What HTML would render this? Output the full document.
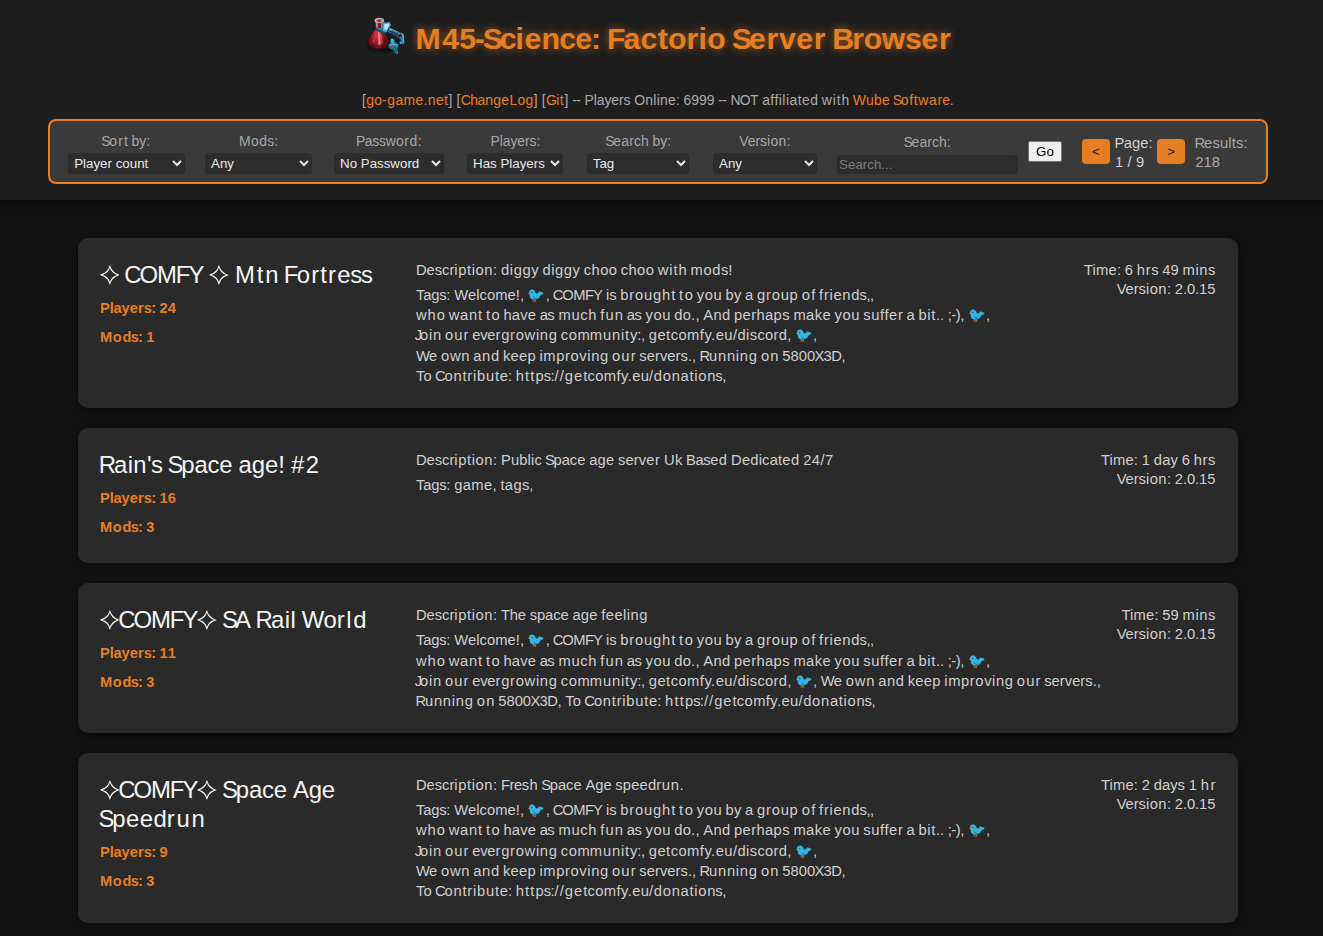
<!DOCTYPE html>
<html lang="en"><head><meta charset="utf-8"><title>M45-Science: Factorio Server Browser</title>
<style>
*{box-sizing:border-box}
html,body{margin:0;padding:0}
body{width:1323px;height:936px;overflow:hidden;background:#121212;color:#cfcfcf;font-family:"Liberation Sans",sans-serif;font-size:16px;position:relative}
.ln{position:absolute;white-space:pre}
a{color:#e67e22;text-decoration:none}
#hdr{position:absolute;left:0;top:0;width:1323px;height:200px;background:#1e1e1e;box-shadow:0 2px 10px rgba(0,0,0,.7)}
.ttl{color:#e67e22;font-weight:bold;text-shadow:0 0 9px rgba(230,126,34,.62)}
.lnk{color:#aaa}
#filter{position:absolute;left:48px;top:119px;width:1220px;height:65px;background:#3a3a3a;border:2px solid #e67e22;border-radius:8px}
.lbl{color:#a6a6a6}
select,input,button{font-family:"Liberation Sans",sans-serif;font-size:13.333px}
select{position:absolute;font-size:13.333px;background:#2d2d2d;color:#e8e8e8;border:0;border-radius:4px;padding:0 0 0 2px;margin:0}
input.s{position:absolute;background:#2d2d2d;color:#fff;border:0;border-radius:4px;padding:1px 2px 1px 2.6px;margin:0}
input.s::placeholder{color:#7a7a7a}
button.go{position:absolute;background:#efefef;color:#000;border:1px solid #767676;border-radius:2px;padding:0;margin:0}
.pg{position:absolute;background:#e67e22;color:#222;border:0;border-radius:4px;text-align:center;font-family:"Liberation Sans",sans-serif;font-size:13.333px}
.card{position:absolute;left:78px;width:1160px;background:#2a2a2a;border-radius:10px;box-shadow:0 2px 10px rgba(0,0,0,.5)}
.nm{color:#f4f4f4}
.or{color:#e67e22;font-weight:bold}
.ln{left:0;width:0}
.ln b,.ln a{position:absolute;top:0;font-weight:inherit}
.bird,.star{position:absolute;display:block}
</style></head><body>
<svg width="0" height="0" style="position:absolute"><defs>
<symbol id="bird" viewBox="0 0 16 14"><g shape-rendering="crispEdges"><rect x="2" y="0" width="1" height="1" fill="#35b2e1" fill-opacity="0.17"/><rect x="3" y="0" width="2" height="1" fill="#35b4e0" fill-opacity="0.49"/><rect x="5" y="0" width="1" height="1" fill="#37b6e1" fill-opacity="0.16"/><rect x="1" y="1" width="1" height="1" fill="#33b3e2" fill-opacity="0.27"/><rect x="2" y="1" width="4" height="1" fill="#36b4e1"/><rect x="6" y="1" width="1" height="1" fill="#36b4e1" fill-opacity="0.33"/><rect x="1" y="2" width="1" height="1" fill="#36b4e0" fill-opacity="0.87"/><rect x="2" y="2" width="1" height="1" fill="#36b4e1"/><rect x="3" y="2" width="1" height="1" fill="#34a5ce"/><rect x="4" y="2" width="2" height="1" fill="#36b4e1"/><rect x="6" y="2" width="1" height="1" fill="#35b3e1" fill-opacity="0.96"/><rect x="7" y="2" width="1" height="1" fill="#2db4e1" fill-opacity="0.07"/><rect x="10" y="2" width="1" height="1" fill="#37b6e4" fill-opacity="0.11"/><rect x="11" y="2" width="1" height="1" fill="#36b3e1" fill-opacity="0.50"/><rect x="12" y="2" width="1" height="1" fill="#36b4e2" fill-opacity="0.28"/><rect x="0" y="3" width="1" height="1" fill="#ff8015" fill-opacity="0.05"/><rect x="1" y="3" width="1" height="1" fill="#859e93" fill-opacity="0.96"/><rect x="2" y="3" width="1" height="1" fill="#36b4e1"/><rect x="3" y="3" width="1" height="1" fill="#2d5d6f"/><rect x="4" y="3" width="1" height="1" fill="#3398be"/><rect x="5" y="3" width="2" height="1" fill="#36b4e1"/><rect x="7" y="3" width="1" height="1" fill="#35b3e1" fill-opacity="0.53"/><rect x="10" y="3" width="1" height="1" fill="#36b4e1" fill-opacity="0.67"/><rect x="11" y="3" width="2" height="1" fill="#36b4e1"/><rect x="13" y="3" width="1" height="1" fill="#36b3e0" fill-opacity="0.95"/><rect x="14" y="3" width="1" height="1" fill="#36b3e1" fill-opacity="0.54"/><rect x="15" y="3" width="1" height="1" fill="#2abfea" fill-opacity="0.05"/><rect x="0" y="4" width="1" height="1" fill="#fa7d21" fill-opacity="0.57"/><rect x="1" y="4" width="1" height="1" fill="#f97d23"/><rect x="2" y="4" width="1" height="1" fill="#45afd1"/><rect x="3" y="4" width="5" height="1" fill="#36b4e1"/><rect x="8" y="4" width="1" height="1" fill="#35b4e1" fill-opacity="0.62"/><rect x="9" y="4" width="1" height="1" fill="#36b3e0" fill-opacity="0.65"/><rect x="10" y="4" width="5" height="1" fill="#36b4e1"/><rect x="15" y="4" width="1" height="1" fill="#36b3e1" fill-opacity="0.37"/><rect x="1" y="5" width="1" height="1" fill="#35b4e1" fill-opacity="0.49"/><rect x="2" y="5" width="11" height="1" fill="#36b4e1"/><rect x="13" y="5" width="1" height="1" fill="#35b4e0" fill-opacity="0.85"/><rect x="14" y="5" width="1" height="1" fill="#34b5e0" fill-opacity="0.33"/><rect x="1" y="6" width="1" height="1" fill="#34b3e0" fill-opacity="0.29"/><rect x="2" y="6" width="10" height="1" fill="#36b4e1"/><rect x="12" y="6" width="1" height="1" fill="#36b4e0" fill-opacity="0.52"/><rect x="1" y="7" width="1" height="1" fill="#35b5df" fill-opacity="0.09"/><rect x="2" y="7" width="3" height="1" fill="#36b4e1"/><rect x="5" y="7" width="1" height="1" fill="#239acd"/><rect x="6" y="7" width="1" height="1" fill="#32afdd"/><rect x="7" y="7" width="4" height="1" fill="#36b4e1"/><rect x="11" y="7" width="1" height="1" fill="#36b3e1" fill-opacity="0.73"/><rect x="2" y="8" width="1" height="1" fill="#35b4e1" fill-opacity="0.79"/><rect x="3" y="8" width="2" height="1" fill="#36b4e1"/><rect x="5" y="8" width="1" height="1" fill="#2aa3d4"/><rect x="6" y="8" width="1" height="1" fill="#1586be"/><rect x="7" y="8" width="3" height="1" fill="#36b4e1"/><rect x="10" y="8" width="1" height="1" fill="#2da7d8"/><rect x="11" y="8" width="1" height="1" fill="#1284bc" fill-opacity="0.77"/><rect x="2" y="9" width="1" height="1" fill="#31b5e6" fill-opacity="0.12"/><rect x="3" y="9" width="1" height="1" fill="#36b3e1" fill-opacity="0.86"/><rect x="4" y="9" width="2" height="1" fill="#36b4e1"/><rect x="6" y="9" width="1" height="1" fill="#28a1d2"/><rect x="7" y="9" width="1" height="1" fill="#0c7ab4"/><rect x="8" y="9" width="1" height="1" fill="#2198cc"/><rect x="9" y="9" width="1" height="1" fill="#2095c9" fill-opacity="0.85"/><rect x="10" y="9" width="1" height="1" fill="#0a79b5" fill-opacity="0.61"/><rect x="11" y="9" width="1" height="1" fill="#0068ae" fill-opacity="0.09"/><rect x="4" y="10" width="1" height="1" fill="#36b4e0" fill-opacity="0.29"/><rect x="5" y="10" width="1" height="1" fill="#74a2a5" fill-opacity="0.73"/><rect x="6" y="10" width="1" height="1" fill="#63a6b4" fill-opacity="0.64"/><rect x="7" y="10" width="1" height="1" fill="#908e78" fill-opacity="0.77"/><rect x="8" y="10" width="1" height="1" fill="#2a789f" fill-opacity="0.38"/><rect x="9" y="10" width="1" height="1" fill="#006ba9" fill-opacity="0.24"/><rect x="4" y="11" width="1" height="1" fill="#f97c21" fill-opacity="0.33"/><rect x="5" y="11" width="1" height="1" fill="#f87d22" fill-opacity="0.74"/><rect x="6" y="11" width="1" height="1" fill="#f87c22" fill-opacity="0.29"/><rect x="7" y="11" width="1" height="1" fill="#f97c22" fill-opacity="0.62"/><rect x="8" y="11" width="1" height="1" fill="#f97c1f" fill-opacity="0.16"/><rect x="4" y="12" width="1" height="1" fill="#fa7b21" fill-opacity="0.21"/><rect x="5" y="12" width="1" height="1" fill="#ff7b21" fill-opacity="0.12"/><rect x="6" y="12" width="1" height="1" fill="#f97d23" fill-opacity="0.55"/><rect x="7" y="12" width="1" height="1" fill="#fa7d22" fill-opacity="0.56"/><rect x="6" y="13" width="1" height="1" fill="#ff7f22" fill-opacity="0.12"/></g></symbol>
<g id="star"><path fill="currentColor" fill-rule="evenodd" d="M0 -10.2 Q2.1 -2.1 10.2 0 Q2.1 2.1 0 10.2 Q-2.1 2.1 -10.2 0 Q-2.1 -2.1 0 -10.2Z M0 -7.2 Q-1.65 -1.65 -7.2 0 Q-1.65 1.65 0 7.2 Q1.65 1.65 7.2 0 Q1.65 -1.65 0 -7.2Z"/></g>
</defs></svg>
<div id="hdr">
<svg id="logo" style="position:absolute;left:364px;top:14px" width="44" height="44" viewBox="0 0 44 44"><defs>
<linearGradient id="lgR" x1="0" y1="0" x2="1" y2="0"><stop offset="0" stop-color="#6e0c14"/><stop offset=".2" stop-color="#a8161f"/><stop offset=".42" stop-color="#cf2b39"/><stop offset=".56" stop-color="#d83c4a"/><stop offset=".72" stop-color="#a3141e"/><stop offset="1" stop-color="#5a0a11"/></linearGradient>
<linearGradient id="lgD" x1="0" y1="0" x2="0" y2="1"><stop offset=".4" stop-color="#2c0307" stop-opacity="0"/><stop offset="1" stop-color="#2c0307" stop-opacity=".65"/></linearGradient>
<linearGradient id="lgB" x1="0" y1="0" x2="0" y2="1"><stop offset="0" stop-color="#3aa6c8"/><stop offset="1" stop-color="#0f6482"/></linearGradient>
<filter id="lgF" x="-10%" y="-10%" width="120%" height="120%"><feGaussianBlur stdDeviation=".42"/></filter>
<filter id="lgS" x="-30%" y="-30%" width="160%" height="160%"><feGaussianBlur stdDeviation="1.8"/></filter>
</defs>
<ellipse cx="19" cy="31" rx="16" ry="7" fill="#000" opacity=".4" filter="url(#lgS)"/>
<g filter="url(#lgF)">
<path id="lgP" d="M11.8 14.4 L19.2 18.4 Q23.4 22.4 25 26.2 Q25.7 30.4 22.6 32.8 Q18.6 35 14.5 34.9 Q9 34.7 6 31.9 Q3.4 29.6 4.3 26.4 Q7.4 20 11.8 14.4Z" fill="url(#lgR)" stroke="#3a060b" stroke-width=".5"/>
<path d="M11.8 14.4 L19.2 18.4 Q23.4 22.4 25 26.2 Q25.7 30.4 22.6 32.8 Q18.6 35 14.5 34.9 Q9 34.7 6 31.9 Q3.4 29.6 4.3 26.4 Q7.4 20 11.8 14.4Z" fill="url(#lgD)"/>
<path d="M13.9 17.2 L15.4 17.6 L16.6 30.4 L14.4 30.6Z" fill="#f59aa3" opacity=".8"/>
<path d="M15.6 18 L16.8 18.6 L18.6 29 L16.9 30Z" fill="#e8606e" opacity=".6"/>
<path d="M11.2 18.6 L12.6 18.2 L10.6 28.8 L8.4 28.6Z" fill="#e05868" opacity=".4"/>
<path d="M19.6 21.6 L21 22.8 L23 30 L20.6 31Z" fill="#4e070d" opacity=".5"/>
<path d="M7 30 Q10 32.6 13 31.4 Q12 34 8.6 33Z" fill="#3a050a" opacity=".5"/>
<path d="M17 31 Q20 33 23 30.6 Q22.4 33.6 18.4 34.2Z" fill="#3a050a" opacity=".45"/>
<path d="M11.4 6.6 L19.4 6.6 L18.6 15.2 L12 14.4Z" fill="#b9a7ac" opacity=".85"/>
<path d="M13.6 8 L17.4 8 L17.2 14.4 L14 13.8Z" fill="#8c1822"/>
<ellipse cx="15.4" cy="6.4" rx="4.7" ry="2.6" fill="#bfb8bb"/>
<ellipse cx="15.4" cy="6.6" rx="3.2" ry="1.6" fill="#a9636d"/>
<ellipse cx="15.2" cy="6.9" rx="1.5" ry=".9" fill="#8c1822"/>
<path d="M11.4 12.6 L18.4 15.6 L19 17.6 L22.2 18.2 L21.6 20 L18.8 20 L11.2 15Z" fill="#0e5a74" stroke="#062c3a" stroke-width=".4"/>
<path d="M12 13.4 L18.2 16.2" stroke="#5cc0de" stroke-width=".6"/>
<path d="M18.9 8.4 L25.5 8 L27.1 10.8 L22.2 18.6 L18.6 17.6 L18.2 14Z" fill="#46aed0" stroke="#0c4a60" stroke-width=".4"/>
<path d="M20.4 9.8 L24.6 9.6 L25.4 11 L22.4 16.2 L20.4 15.6Z" fill="#d4eef8" opacity=".85"/>
<circle cx="21.8" cy="9" r=".7" fill="#c03030"/>
<path d="M25.4 13.4 L37 19 L35 23.6 L23.4 17.8Z" fill="url(#lgB)" stroke="#062c3a" stroke-width=".5"/>
<path d="M25.8 14.4 L36.4 19.6" stroke="#8fd6ec" stroke-width=".7"/>
<path d="M24.8 16.6 L35.2 21.6" stroke="#04222e" stroke-width="1"/>
<path d="M29 15.6 L27.8 19.4 M31.6 16.8 L30.4 20.6 M33.8 18 L32.8 21.6" stroke="#083848" stroke-width=".5"/>
<path d="M36.2 18.4 Q40.4 18.6 40 23 Q39.6 26 40.6 28.8 Q40.8 30.6 38.8 30.2 Q36.6 29.6 35.4 28.8 Q36.8 27.4 36.8 25.4 Q35.4 25.6 34.4 26.2 L33 24 Q35.2 23 36 22Z" fill="#2390b4" stroke="#062c3a" stroke-width=".4"/>
<path d="M37.8 19.4 Q39.6 20.2 39.4 23.2 Q39.2 25.8 40 28.4" stroke="#9fe0f4" stroke-width=".6" fill="none"/>
<path d="M35.6 28.6 L37.4 29.4" stroke="#bfeaf8" stroke-width=".9"/>
<circle cx="36.5" cy="22" r="1.4" fill="#1e0c10"/>
<circle cx="34.6" cy="20.6" r=".8" fill="#c83434"/>
<circle cx="36.5" cy="22.8" r=".7" fill="#c83434"/>
<path d="M35.2 23.4 L30.6 26.8 L32 28.6 L36 25Z" fill="#0a1418"/>
<path d="M26 25 Q28.2 23.8 30.4 24.8 L31.2 28 Q33.4 28.6 35 30.8 L34 33 Q33 35.2 34.2 38.2 Q34.4 40.4 32 40 Q30 38.4 29.6 35.8 Q26.4 35.4 24.2 33.6 Q23.6 30.8 26 29.6Z" fill="#1a84a8" stroke="#062c3a" stroke-width=".45"/>
<path d="M27.2 25.4 L29 25.2 L29.6 29 L27.8 29.4Z" fill="#9fe0f4" opacity=".85"/>
<path d="M28.2 26.4 L28.6 28.6" stroke="#0b4a60" stroke-width=".5"/>
<path d="M25.4 31 Q29 29.8 33.2 31.2" stroke="#7fd0e8" stroke-width=".7" fill="none"/>
<path d="M30.8 32.6 L32.4 37.6" stroke="#083848" stroke-width=".8"/>
<path d="M25.2 32.8 Q27.6 34.2 30 34.4" stroke="#083848" stroke-width=".5" fill="none"/>
<circle cx="28.4" cy="32.4" r=".5" fill="#c83434"/>
</g></svg>
<div class="ln ttl" style="top:18px;font-size:30.24px;line-height:41px;height:41px;"><b style="left:415.59px;letter-spacing:1.61px">M4</b><b style="left:459.22px;letter-spacing:-1.2px">5-</b><b style="left:482.75px">S</b><b style="left:499.79px">c</b><b style="left:515.62px;letter-spacing:0.4px">ien</b><b style="left:559.16px">c</b><b style="left:575.2px">e</b><b style="left:590.92px">:</b><b style="left:606.88px">F</b><b style="left:623.61px;letter-spacing:0.2px">actorio</b><b style="left:731.71px">S</b><b style="left:749.08px;letter-spacing:0.63px">erver</b><b style="left:832.23px">B</b><b style="left:852.31px;letter-spacing:-0.36px">rowse</b><b style="left:938.88px">r</b></div>
<div class="ln lnk" style="top:90px;font-size:13.94px;line-height:20px;height:20px;"><b style="left:361.99px">[</b><a style="left:366.17px;letter-spacing:0.35px">go-game.net</a><b style="left:448.43px">]</b><b style="left:456.46px">[</b><a style="left:460.64px;letter-spacing:-0.49px">Cha</a><a style="left:485.25px;letter-spacing:0.31px">ngeLog</a><b style="left:533.71px">]</b><b style="left:541.74px">[</b><a style="left:545.92px;letter-spacing:-0.55px">Gi</a><a style="left:559.84px">t</a><b style="left:564.54px">]</b><b style="left:572.27px;letter-spacing:-0.55px">--</b><b style="left:584.58px;letter-spacing:-0.08px">Players</b><b style="left:634.22px;letter-spacing:0.25px">Online:</b><b style="left:683.52px;letter-spacing:0.02px">6999</b><b style="left:718.17px;letter-spacing:-0.55px">--</b><b style="left:730.48px;letter-spacing:-0.66px">NOT</b><b style="left:762.14px;letter-spacing:0.47px">affiliated</b><b style="left:821.75px;letter-spacing:0.89px">with</b><a style="left:852.81px;letter-spacing:0.24px">Wube</a><a style="left:892.66px">S</a><a style="left:900.75px;letter-spacing:0.68px">oftwar</a><a style="left:942.16px">e</a><b style="left:949.78px">.</b></div>
<div id="filter">
<div class="ln lbl" style="top:10px;font-size:13.94px;line-height:20px;height:20px;"><b style="left:51.14px">S</b><b style="left:59.23px;letter-spacing:1.23px">ort</b><b style="left:81.55px;letter-spacing:0.02px">by:</b></div>
<select style="left:18.2px;top:32.0px;width:116.8px;height:21.0px"><option>Player count</option></select>
<div class="ln lbl" style="top:10px;font-size:13.94px;line-height:20px;height:20px;"><b style="left:188.95px;letter-spacing:0.43px">Mods</b><b style="left:224.22px">:</b></div>
<select style="left:155.0px;top:32.0px;width:107.0px;height:21.0px"><option>Any</option></select>
<div class="ln lbl" style="top:10px;font-size:13.94px;line-height:20px;height:20px;"><b style="left:306.05px">P</b><b style="left:314.64px;letter-spacing:-0.16px">assw</b><b style="left:345.97px;letter-spacing:0.51px">ord:</b></div>
<select style="left:284.0px;top:32.0px;width:110.0px;height:21.0px"><option>No Password</option></select>
<div class="ln lbl" style="top:10px;font-size:13.94px;line-height:20px;height:20px;"><b style="left:440.62px;letter-spacing:-0.1px">Players:</b></div>
<select style="left:417.0px;top:32.0px;width:96.0px;height:21.0px"><option>Has Players</option></select>
<div class="ln lbl" style="top:10px;font-size:13.94px;line-height:20px;height:20px;"><b style="left:555.24px">S</b><b style="left:563.33px;letter-spacing:0.16px">earch</b><b style="left:602.45px;letter-spacing:0.02px">by:</b></div>
<select style="left:536.8px;top:32.0px;width:101.9px;height:21.0px"><option>Tag</option></select>
<div class="ln lbl" style="top:10px;font-size:13.94px;line-height:20px;height:20px;"><b style="left:689.27px;letter-spacing:-0.08px">Vers</b><b style="left:716.94px;letter-spacing:0.41px">ion:</b></div>
<select style="left:663.0px;top:32.0px;width:104.0px;height:21.0px"><option>Any</option></select>
<div class="ln lbl" style="top:11px;font-size:13.94px;line-height:20px;height:20px;"><b style="left:853.52px">S</b><b style="left:861.61px;letter-spacing:0.07px">earch:</b></div>
<input class="s" placeholder="Search..." style="left:786.5px;top:34.2px;width:181.5px;height:18.6px">
<button class="go" style="left:978.3px;top:20.3px;width:33.4px;height:20.5px">Go</button>
<div class="pg" style="left:1031.7px;top:17.8px;width:28.5px;height:25.5px;line-height:25px">&lt;</div>
<div class="ln" style="top:12px;font-size:14.76px;line-height:20px;height:20px;"><b style="left:1064.61px">P</b><b style="left:1073.7px;letter-spacing:0.05px">age:</b></div>
<div class="ln" style="top:31px;font-size:14.76px;line-height:20px;height:20px;"><b style="left:1065.01px">1</b><b style="left:1077.61px">/</b><b style="left:1086.1px">9</b></div>
<div class="pg" style="left:1107.0px;top:17.8px;width:28.3px;height:25.5px;line-height:25px">&gt;</div>
<div class="ln lbl" style="top:12px;font-size:14.76px;line-height:20px;height:20px;"><b style="left:1144.59px">R</b><b style="left:1154.12px;letter-spacing:0.14px">esults:</b></div>
<div class="ln lbl" style="top:31px;font-size:14.76px;line-height:20px;height:20px;"><b style="left:1145.19px;letter-spacing:0.02px">218</b></div>
</div>
</div>
<div class="card" style="top:238px;height:170px">
<div class="ln nm" style="top:22px;font-size:23.909px;line-height:29px;height:29px;"><svg class="star" style="left:21.58px;top:5.20px" width="19.8" height="19.8" viewBox="-10 -10 20 20"><use href="#star"/></svg><b style="left:46.2px">C</b><b style="left:61.42px;letter-spacing:-1.07px">OMF</b><b style="left:110.54px">Y</b><svg class="star" style="left:131.40px;top:5.20px" width="19.8" height="19.8" viewBox="-10 -10 20 20"><use href="#star"/></svg><b style="left:157.11px;letter-spacing:1.85px">Mtn</b><b style="left:205.78px">F</b><b style="left:218.67px;letter-spacing:1.19px">ortre</b><b style="left:272.16px">s</b><b style="left:283.1px">s</b></div>
<div class="ln or" style="top:60px;font-size:14.606px;line-height:20px;height:20px;"><b style="left:22px;letter-spacing:-0.1px">Play</b><b style="left:51.77px;letter-spacing:0.05px">ers</b><b style="left:73.24px">:</b><b style="left:81.53px;letter-spacing:0.06px">24</b></div>
<div class="ln or" style="top:89px;font-size:14.606px;line-height:20px;height:20px;"><b style="left:22px;letter-spacing:0.66px">Mod</b><b style="left:52.87px">s</b><b style="left:59.94px">:</b><b style="left:68.25px">1</b></div>
<div class="ln" style="top:22px;font-size:14.76px;line-height:20px;height:20px;"><b style="left:338px;letter-spacing:-0.05px">Descr</b><b style="left:376.36px;letter-spacing:0.58px">iption:</b><b style="left:423.05px;letter-spacing:0.57px">diggy</b><b style="left:464.41px;letter-spacing:0.57px">diggy</b><b style="left:505.77px;letter-spacing:0.4px">choo</b><b style="left:542.73px;letter-spacing:0.4px">choo</b><b style="left:579.7px;letter-spacing:0.95px">with</b><b style="left:612.58px;letter-spacing:0.59px">mods</b><b style="left:650.33px">!</b></div>
<div class="ln" style="top:47px;font-size:14.76px;line-height:20px;height:20px;"><b style="left:338px;letter-spacing:-0.2px">Tags:</b><b style="left:376.28px;letter-spacing:0.04px">Welcome!,</b><svg class="bird" style="left:450.2px;top:4px" width="16" height="14" viewBox="0 0 16 14"><use href="#bird"/></svg><b style="left:467.75px">,</b><b style="left:474.84px">C</b><b style="left:484.28px;letter-spacing:-0.51px">OMF</b><b style="left:514.94px">Y</b><b style="left:527.95px;letter-spacing:-0.06px">is</b><b style="left:542.31px;letter-spacing:0.82px">brought</b><b style="left:601.11px;letter-spacing:1.58px">to</b><b style="left:618.77px;letter-spacing:0.57px">you</b><b style="left:647.47px;letter-spacing:0.3px">by</b><b style="left:667.05px">a</b><b style="left:678.95px;letter-spacing:0.79px">group</b><b style="left:723.67px;letter-spacing:1.34px">of</b><b style="left:741.09px;letter-spacing:0.7px">friend</b><b style="left:781.55px;letter-spacing:-0.49px">s,,</b></div>
<div class="ln" style="top:67px;font-size:14.76px;line-height:20px;height:20px;"><b style="left:338px;letter-spacing:0.91px">who</b><b style="left:370.67px;letter-spacing:0.76px">want</b><b style="left:407.91px;letter-spacing:1.58px">to</b><b style="left:425.56px;letter-spacing:0.12px">have</b><b style="left:461.72px;letter-spacing:-0.64px">as</b><b style="left:480.44px;letter-spacing:0.68px">much</b><b style="left:522.34px;letter-spacing:1.1px">fun</b><b style="left:548.84px;letter-spacing:-0.64px">as</b><b style="left:567.56px;letter-spacing:0.57px">you</b><b style="left:596.27px;letter-spacing:0.21px">do.,</b><b style="left:625.3px;letter-spacing:0.34px">And</b><b style="left:656px;letter-spacing:0.37px">perhaps</b><b style="left:715.38px;letter-spacing:0.41px">make</b><b style="left:756.47px;letter-spacing:0.57px">you</b><b style="left:785.17px;letter-spacing:0.61px">suffer</b><b style="left:828.6px">a</b><b style="left:840.5px;letter-spacing:0.63px">bit.</b><b style="left:861.96px">.</b><b style="left:869.73px;letter-spacing:-0.47px">;-),</b><svg class="bird" style="left:890.5px;top:4px" width="16" height="14" viewBox="0 0 16 14"><use href="#bird"/></svg><b style="left:908.03px">,</b></div>
<div class="ln" style="top:87px;font-size:14.76px;line-height:20px;height:20px;"><b style="left:336.8px">J</b><b style="left:341.92px;letter-spacing:0.8px">oin</b><b style="left:367px;letter-spacing:1.09px">our</b><b style="left:394.3px;letter-spacing:-0.28px">eve</b><b style="left:417.55px;letter-spacing:0.69px">rgrowing</b><b style="left:482.8px;letter-spacing:0.59px">com</b><b style="left:511.86px;letter-spacing:0.79px">munity</b><b style="left:559.34px;letter-spacing:-0.5px">:,</b><b style="left:570.83px;letter-spacing:0.44px">getcomfy.eu/dis</b><b style="left:679.44px;letter-spacing:0.29px">cord,</b><svg class="bird" style="left:717.5px;top:4px" width="16" height="14" viewBox="0 0 16 14"><use href="#bird"/></svg><b style="left:735.06px">,</b></div>
<div class="ln" style="top:108px;font-size:14.76px;line-height:20px;height:20px;"><b style="left:338px;letter-spacing:-0.66px">We</b><b style="left:362.97px;letter-spacing:0.77px">own</b><b style="left:395.34px;letter-spacing:0.59px">and</b><b style="left:424.92px;letter-spacing:0.25px">keep</b><b style="left:461.45px;letter-spacing:0.6px">improving</b><b style="left:534.06px;letter-spacing:1.09px">our</b><b style="left:561.36px;letter-spacing:0.03px">servers.,</b><b style="left:621.45px">R</b><b style="left:630.98px;letter-spacing:0.75px">unning</b><b style="left:682.89px;letter-spacing:1.17px">on</b><b style="left:704.25px;letter-spacing:0.02px">5800</b><b style="left:736.47px">X</b><b style="left:745.59px;letter-spacing:-0.48px">3D,</b></div>
<div class="ln" style="top:128px;font-size:14.76px;line-height:20px;height:20px;"><b style="left:338px;letter-spacing:0.11px">To</b><b style="left:356.91px">C</b><b style="left:366.55px;letter-spacing:0.75px">ontribute</b><b style="left:429.89px">:</b><b style="left:437.67px;letter-spacing:1.16px">http</b><b style="left:465.8px;letter-spacing:-0.73px">s:</b><b style="left:476.55px;letter-spacing:1.03px">//get</b><b style="left:509.42px;letter-spacing:0.4px">comfy.eu</b><b style="left:571.06px;letter-spacing:0.7px">/donation</b><b style="left:637.21px">s</b><b style="left:644.18px">,</b></div>
<div class="ln" style="top:22px;font-size:14.76px;line-height:20px;height:20px;"><b style="left:1005.94px;letter-spacing:0.19px">Time:</b><b style="left:1046.85px">6</b><b style="left:1058.83px;letter-spacing:0.6px">hrs</b><b style="left:1084.31px;letter-spacing:0.03px">49</b><b style="left:1104.53px;letter-spacing:0.59px">mins</b></div>
<div class="ln" style="top:41px;font-size:14.76px;line-height:20px;height:20px;"><b style="left:1038.64px;letter-spacing:-0.08px">Vers</b><b style="left:1067.94px;letter-spacing:0.44px">ion:</b><b style="left:1096.86px;letter-spacing:-0.09px">2.0.15</b></div>
</div>
<div class="card" style="top:428px;height:135px">
<div class="ln nm" style="top:22px;font-size:23.909px;line-height:29px;height:29px;"><b style="left:20.68px">R</b><b style="left:36.05px;letter-spacing:0.32px">ain'</b><b style="left:72.92px">s</b><b style="left:89.46px">S</b><b style="left:103.27px;letter-spacing:-0.16px">pac</b><b style="left:141.34px">e</b><b style="left:160.56px;letter-spacing:-0.05px">age!</b><b style="left:212.98px;letter-spacing:1.55px">#2</b></div>
<div class="ln or" style="top:60px;font-size:14.606px;line-height:20px;height:20px;"><b style="left:22px;letter-spacing:-0.1px">Play</b><b style="left:51.77px;letter-spacing:0.05px">ers</b><b style="left:73.24px">:</b><b style="left:81.53px;letter-spacing:0.06px">16</b></div>
<div class="ln or" style="top:89px;font-size:14.606px;line-height:20px;height:20px;"><b style="left:22px;letter-spacing:0.66px">Mod</b><b style="left:52.87px">s</b><b style="left:59.94px">:</b><b style="left:68.25px">3</b></div>
<div class="ln" style="top:22px;font-size:14.76px;line-height:20px;height:20px;"><b style="left:338px;letter-spacing:-0.05px">Descr</b><b style="left:376.36px;letter-spacing:0.58px">iption:</b><b style="left:423.05px;letter-spacing:0.11px">Public</b><b style="left:466.92px">S</b><b style="left:475.48px;letter-spacing:-0.03px">pace</b><b style="left:511.2px;letter-spacing:0.2px">age</b><b style="left:540px;letter-spacing:0.07px">serve</b><b style="left:576.89px">r</b><b style="left:586.08px;letter-spacing:0.17px">Uk</b><b style="left:608.05px;letter-spacing:-0.41px">Base</b><b style="left:640.8px">d</b><b style="left:653.09px;letter-spacing:0.17px">Dedicate</b><b style="left:712.88px">d</b><b style="left:725.17px;letter-spacing:0.43px">24/7</b></div>
<div class="ln" style="top:47px;font-size:14.76px;line-height:20px;height:20px;"><b style="left:338px;letter-spacing:-0.2px">Tags:</b><b style="left:376.28px;letter-spacing:0.32px">game,</b><b style="left:422.39px;letter-spacing:0.36px">tags</b><b style="left:451.24px">,</b></div>
<div class="ln" style="top:22px;font-size:14.76px;line-height:20px;height:20px;"><b style="left:1022.88px;letter-spacing:0.19px">Time:</b><b style="left:1063.79px">1</b><b style="left:1075.77px;letter-spacing:0.22px">day</b><b style="left:1103.79px">6</b><b style="left:1115.77px;letter-spacing:0.6px">hrs</b></div>
<div class="ln" style="top:41px;font-size:14.76px;line-height:20px;height:20px;"><b style="left:1038.64px;letter-spacing:-0.08px">Vers</b><b style="left:1067.94px;letter-spacing:0.44px">ion:</b><b style="left:1096.86px;letter-spacing:-0.09px">2.0.15</b></div>
</div>
<div class="card" style="top:583px;height:150px">
<div class="ln nm" style="top:22px;font-size:23.909px;line-height:29px;height:29px;"><svg class="star" style="left:21.58px;top:5.20px" width="19.8" height="19.8" viewBox="-10 -10 20 20"><use href="#star"/></svg><b style="left:40.19px">C</b><b style="left:55.41px;letter-spacing:-1.07px">OMF</b><b style="left:104.53px">Y</b><svg class="star" style="left:119.37px;top:5.20px" width="19.8" height="19.8" viewBox="-10 -10 20 20"><use href="#star"/></svg><b style="left:143.94px">S</b><b style="left:156.98px">A</b><b style="left:177.52px">R</b><b style="left:192.89px;letter-spacing:0.48px">ail</b><b style="left:223.8px;letter-spacing:-0.42px">Wo</b><b style="left:258.78px;letter-spacing:1.55px">rld</b></div>
<div class="ln or" style="top:60px;font-size:14.606px;line-height:20px;height:20px;"><b style="left:22px;letter-spacing:-0.1px">Play</b><b style="left:51.77px;letter-spacing:0.05px">ers</b><b style="left:73.24px">:</b><b style="left:81.53px;letter-spacing:0.86px">11</b></div>
<div class="ln or" style="top:89px;font-size:14.606px;line-height:20px;height:20px;"><b style="left:22px;letter-spacing:0.66px">Mod</b><b style="left:52.87px">s</b><b style="left:59.94px">:</b><b style="left:68.25px">3</b></div>
<div class="ln" style="top:22px;font-size:14.76px;line-height:20px;height:20px;"><b style="left:338px;letter-spacing:-0.05px">Descr</b><b style="left:376.36px;letter-spacing:0.58px">iption:</b><b style="left:423.05px;letter-spacing:-0.22px">The</b><b style="left:451.81px;letter-spacing:-0.14px">space</b><b style="left:494.41px;letter-spacing:0.2px">age</b><b style="left:523.2px;letter-spacing:0.47px">feeling</b></div>
<div class="ln" style="top:47px;font-size:14.76px;line-height:20px;height:20px;"><b style="left:338px;letter-spacing:-0.2px">Tags:</b><b style="left:376.28px;letter-spacing:0.04px">Welcome!,</b><svg class="bird" style="left:450.2px;top:4px" width="16" height="14" viewBox="0 0 16 14"><use href="#bird"/></svg><b style="left:467.75px">,</b><b style="left:474.84px">C</b><b style="left:484.28px;letter-spacing:-0.51px">OMF</b><b style="left:514.94px">Y</b><b style="left:527.95px;letter-spacing:-0.06px">is</b><b style="left:542.31px;letter-spacing:0.82px">brought</b><b style="left:601.11px;letter-spacing:1.58px">to</b><b style="left:618.77px;letter-spacing:0.57px">you</b><b style="left:647.47px;letter-spacing:0.3px">by</b><b style="left:667.05px">a</b><b style="left:678.95px;letter-spacing:0.79px">group</b><b style="left:723.67px;letter-spacing:1.34px">of</b><b style="left:741.09px;letter-spacing:0.7px">friend</b><b style="left:781.55px;letter-spacing:-0.49px">s,,</b></div>
<div class="ln" style="top:68px;font-size:14.76px;line-height:20px;height:20px;"><b style="left:338px;letter-spacing:0.91px">who</b><b style="left:370.67px;letter-spacing:0.76px">want</b><b style="left:407.91px;letter-spacing:1.58px">to</b><b style="left:425.56px;letter-spacing:0.12px">have</b><b style="left:461.72px;letter-spacing:-0.64px">as</b><b style="left:480.44px;letter-spacing:0.68px">much</b><b style="left:522.34px;letter-spacing:1.1px">fun</b><b style="left:548.84px;letter-spacing:-0.64px">as</b><b style="left:567.56px;letter-spacing:0.57px">you</b><b style="left:596.27px;letter-spacing:0.21px">do.,</b><b style="left:625.3px;letter-spacing:0.34px">And</b><b style="left:656px;letter-spacing:0.37px">perhaps</b><b style="left:715.38px;letter-spacing:0.41px">make</b><b style="left:756.47px;letter-spacing:0.57px">you</b><b style="left:785.17px;letter-spacing:0.61px">suffer</b><b style="left:828.6px">a</b><b style="left:840.5px;letter-spacing:0.63px">bit.</b><b style="left:861.96px">.</b><b style="left:869.73px;letter-spacing:-0.47px">;-),</b><svg class="bird" style="left:890.5px;top:4px" width="16" height="14" viewBox="0 0 16 14"><use href="#bird"/></svg><b style="left:908.03px">,</b></div>
<div class="ln" style="top:88px;font-size:14.76px;line-height:20px;height:20px;"><b style="left:336.8px">J</b><b style="left:341.92px;letter-spacing:0.8px">oin</b><b style="left:367px;letter-spacing:1.09px">our</b><b style="left:394.3px;letter-spacing:-0.28px">eve</b><b style="left:417.55px;letter-spacing:0.69px">rgrowing</b><b style="left:482.8px;letter-spacing:0.59px">com</b><b style="left:511.86px;letter-spacing:0.79px">munity</b><b style="left:559.34px;letter-spacing:-0.5px">:,</b><b style="left:570.83px;letter-spacing:0.44px">getcomfy.eu/dis</b><b style="left:679.44px;letter-spacing:0.29px">cord,</b><svg class="bird" style="left:717.5px;top:4px" width="16" height="14" viewBox="0 0 16 14"><use href="#bird"/></svg><b style="left:735.06px">,</b><b style="left:742.8px;letter-spacing:-0.66px">We</b><b style="left:767.77px;letter-spacing:0.77px">own</b><b style="left:800.14px;letter-spacing:0.59px">and</b><b style="left:829.72px;letter-spacing:0.25px">keep</b><b style="left:866.25px;letter-spacing:0.6px">improving</b><b style="left:938.86px;letter-spacing:1.09px">our</b><b style="left:966.16px;letter-spacing:0.03px">servers.,</b></div>
<div class="ln" style="top:108px;font-size:14.76px;line-height:20px;height:20px;"><b style="left:337.4px">R</b><b style="left:346.94px;letter-spacing:0.75px">unning</b><b style="left:398.84px;letter-spacing:1.17px">on</b><b style="left:420.2px;letter-spacing:0.02px">5800</b><b style="left:452.42px">X</b><b style="left:461.55px;letter-spacing:-0.48px">3D,</b><b style="left:487.34px;letter-spacing:0.11px">To</b><b style="left:506.26px">C</b><b style="left:515.89px;letter-spacing:0.75px">ontribute</b><b style="left:579.24px">:</b><b style="left:587.02px;letter-spacing:1.16px">http</b><b style="left:615.14px;letter-spacing:-0.73px">s:</b><b style="left:625.89px;letter-spacing:1.03px">//get</b><b style="left:658.77px;letter-spacing:0.4px">comfy.eu</b><b style="left:720.41px;letter-spacing:0.7px">/donation</b><b style="left:786.55px">s</b><b style="left:793.52px">,</b></div>
<div class="ln" style="top:22px;font-size:14.76px;line-height:20px;height:20px;"><b style="left:1043.41px;letter-spacing:0.19px">Time:</b><b style="left:1084.31px;letter-spacing:0.03px">59</b><b style="left:1104.53px;letter-spacing:0.59px">mins</b></div>
<div class="ln" style="top:41px;font-size:14.76px;line-height:20px;height:20px;"><b style="left:1038.64px;letter-spacing:-0.08px">Vers</b><b style="left:1067.94px;letter-spacing:0.44px">ion:</b><b style="left:1096.86px;letter-spacing:-0.09px">2.0.15</b></div>
</div>
<div class="card" style="top:753px;height:170px">
<div class="ln nm" style="top:22px;font-size:23.909px;line-height:29px;height:29px;"><svg class="star" style="left:21.58px;top:5.20px" width="19.8" height="19.8" viewBox="-10 -10 20 20"><use href="#star"/></svg><b style="left:40.19px">C</b><b style="left:55.41px;letter-spacing:-1.07px">OMF</b><b style="left:104.53px">Y</b><svg class="star" style="left:119.37px;top:5.20px" width="19.8" height="19.8" viewBox="-10 -10 20 20"><use href="#star"/></svg><b style="left:143.94px">S</b><b style="left:157.75px;letter-spacing:-0.16px">pac</b><b style="left:195.82px">e</b><b style="left:215.05px;letter-spacing:-0.28px">Age</b></div>
<div class="ln nm" style="top:51px;font-size:23.909px;line-height:29px;height:29px;"><b style="left:20.55px">S</b><b style="left:34.36px;letter-spacing:0.42px">peed</b><b style="left:88.81px;letter-spacing:1.76px">run</b></div>
<div class="ln or" style="top:89px;font-size:14.606px;line-height:20px;height:20px;"><b style="left:22px;letter-spacing:-0.1px">Play</b><b style="left:51.77px;letter-spacing:0.05px">ers</b><b style="left:73.24px">:</b><b style="left:81.55px">9</b></div>
<div class="ln or" style="top:118px;font-size:14.606px;line-height:20px;height:20px;"><b style="left:22px;letter-spacing:0.66px">Mod</b><b style="left:52.87px">s</b><b style="left:59.94px">:</b><b style="left:68.25px">3</b></div>
<div class="ln" style="top:22px;font-size:14.76px;line-height:20px;height:20px;"><b style="left:338px;letter-spacing:-0.05px">Descr</b><b style="left:376.36px;letter-spacing:0.58px">iption:</b><b style="left:423.05px;letter-spacing:-0.46px">Fres</b><b style="left:451.52px">h</b><b style="left:463.15px">S</b><b style="left:471.72px;letter-spacing:-0.03px">pace</b><b style="left:507.44px;letter-spacing:-0.05px">Age</b><b style="left:537.36px;letter-spacing:0.14px">speed</b><b style="left:578.17px;letter-spacing:0.71px">run.</b></div>
<div class="ln" style="top:47px;font-size:14.76px;line-height:20px;height:20px;"><b style="left:338px;letter-spacing:-0.2px">Tags:</b><b style="left:376.28px;letter-spacing:0.04px">Welcome!,</b><svg class="bird" style="left:450.2px;top:4px" width="16" height="14" viewBox="0 0 16 14"><use href="#bird"/></svg><b style="left:467.75px">,</b><b style="left:474.84px">C</b><b style="left:484.28px;letter-spacing:-0.51px">OMF</b><b style="left:514.94px">Y</b><b style="left:527.95px;letter-spacing:-0.06px">is</b><b style="left:542.31px;letter-spacing:0.82px">brought</b><b style="left:601.11px;letter-spacing:1.58px">to</b><b style="left:618.77px;letter-spacing:0.57px">you</b><b style="left:647.47px;letter-spacing:0.3px">by</b><b style="left:667.05px">a</b><b style="left:678.95px;letter-spacing:0.79px">group</b><b style="left:723.67px;letter-spacing:1.34px">of</b><b style="left:741.09px;letter-spacing:0.7px">friend</b><b style="left:781.55px;letter-spacing:-0.49px">s,,</b></div>
<div class="ln" style="top:67px;font-size:14.76px;line-height:20px;height:20px;"><b style="left:338px;letter-spacing:0.91px">who</b><b style="left:370.67px;letter-spacing:0.76px">want</b><b style="left:407.91px;letter-spacing:1.58px">to</b><b style="left:425.56px;letter-spacing:0.12px">have</b><b style="left:461.72px;letter-spacing:-0.64px">as</b><b style="left:480.44px;letter-spacing:0.68px">much</b><b style="left:522.34px;letter-spacing:1.1px">fun</b><b style="left:548.84px;letter-spacing:-0.64px">as</b><b style="left:567.56px;letter-spacing:0.57px">you</b><b style="left:596.27px;letter-spacing:0.21px">do.,</b><b style="left:625.3px;letter-spacing:0.34px">And</b><b style="left:656px;letter-spacing:0.37px">perhaps</b><b style="left:715.38px;letter-spacing:0.41px">make</b><b style="left:756.47px;letter-spacing:0.57px">you</b><b style="left:785.17px;letter-spacing:0.61px">suffer</b><b style="left:828.6px">a</b><b style="left:840.5px;letter-spacing:0.63px">bit.</b><b style="left:861.96px">.</b><b style="left:869.73px;letter-spacing:-0.47px">;-),</b><svg class="bird" style="left:890.5px;top:4px" width="16" height="14" viewBox="0 0 16 14"><use href="#bird"/></svg><b style="left:908.03px">,</b></div>
<div class="ln" style="top:88px;font-size:14.76px;line-height:20px;height:20px;"><b style="left:336.8px">J</b><b style="left:341.92px;letter-spacing:0.8px">oin</b><b style="left:367px;letter-spacing:1.09px">our</b><b style="left:394.3px;letter-spacing:-0.28px">eve</b><b style="left:417.55px;letter-spacing:0.69px">rgrowing</b><b style="left:482.8px;letter-spacing:0.59px">com</b><b style="left:511.86px;letter-spacing:0.79px">munity</b><b style="left:559.34px;letter-spacing:-0.5px">:,</b><b style="left:570.83px;letter-spacing:0.44px">getcomfy.eu/dis</b><b style="left:679.44px;letter-spacing:0.29px">cord,</b><svg class="bird" style="left:717.5px;top:4px" width="16" height="14" viewBox="0 0 16 14"><use href="#bird"/></svg><b style="left:735.06px">,</b></div>
<div class="ln" style="top:108px;font-size:14.76px;line-height:20px;height:20px;"><b style="left:338px;letter-spacing:-0.66px">We</b><b style="left:362.97px;letter-spacing:0.77px">own</b><b style="left:395.34px;letter-spacing:0.59px">and</b><b style="left:424.92px;letter-spacing:0.25px">keep</b><b style="left:461.45px;letter-spacing:0.6px">improving</b><b style="left:534.06px;letter-spacing:1.09px">our</b><b style="left:561.36px;letter-spacing:0.03px">servers.,</b><b style="left:621.45px">R</b><b style="left:630.98px;letter-spacing:0.75px">unning</b><b style="left:682.89px;letter-spacing:1.17px">on</b><b style="left:704.25px;letter-spacing:0.02px">5800</b><b style="left:736.47px">X</b><b style="left:745.59px;letter-spacing:-0.48px">3D,</b></div>
<div class="ln" style="top:128px;font-size:14.76px;line-height:20px;height:20px;"><b style="left:338px;letter-spacing:0.11px">To</b><b style="left:356.91px">C</b><b style="left:366.55px;letter-spacing:0.75px">ontribute</b><b style="left:429.89px">:</b><b style="left:437.67px;letter-spacing:1.16px">http</b><b style="left:465.8px;letter-spacing:-0.73px">s:</b><b style="left:476.55px;letter-spacing:1.03px">//get</b><b style="left:509.42px;letter-spacing:0.4px">comfy.eu</b><b style="left:571.06px;letter-spacing:0.7px">/donation</b><b style="left:637.21px">s</b><b style="left:644.18px">,</b></div>
<div class="ln" style="top:22px;font-size:14.76px;line-height:20px;height:20px;"><b style="left:1022.88px;letter-spacing:0.19px">Time:</b><b style="left:1063.79px">2</b><b style="left:1075.77px;letter-spacing:-0.02px">days</b><b style="left:1110.68px">1</b><b style="left:1122.66px;letter-spacing:1.7px">hr</b></div>
<div class="ln" style="top:41px;font-size:14.76px;line-height:20px;height:20px;"><b style="left:1038.64px;letter-spacing:-0.08px">Vers</b><b style="left:1067.94px;letter-spacing:0.44px">ion:</b><b style="left:1096.86px;letter-spacing:-0.09px">2.0.15</b></div>
</div>
</body></html>
